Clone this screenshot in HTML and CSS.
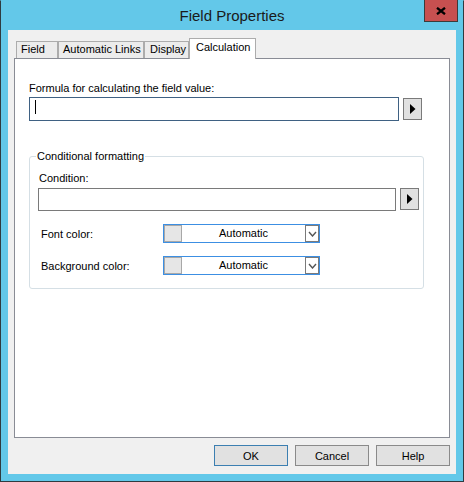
FILE: index.html
```html
<!DOCTYPE html>
<html lang="en">
<head>
  <meta charset="UTF-8" />
  <title>Field Properties</title>
  <link rel="stylesheet" href="styles.css">
</head>
<body>
  <div class="window">
    <div class="titlebar">
      <span class="title">Field Properties</span>
      <div class="close-btn">
        <svg width="10" height="8" viewBox="0 0 10 8"><path d="M1 0.8 L9 7.2 M9 0.8 L1 7.2" stroke="#000" stroke-width="2.3" fill="none"/></svg>
      </div>
    </div>

    <div class="client">
      <div class="tabs">
        <div class="tab tab-field">Field</div>
        <div class="tab tab-links">Automatic Links</div>
        <div class="tab tab-display">Display</div>
        <div class="tab tab-calc active">Calculation</div>
      </div>

      <div class="panel">
        <div class="label formula-label">Formula for calculating the field value:</div>
        <div class="input-row">
          <div class="textbox focused formula-box"><span class="caret"></span></div>
          <div class="arrow-btn">
            <svg width="6" height="10" viewBox="0 0 6 10"><polygon points="0,0 5.5,5 0,10" fill="#000"/></svg>
          </div>
        </div>

        <!-- Conditional formatting group -->
        <fieldset class="group">
          <legend>Conditional formatting</legend>
          <div class="label condition-label">Condition:</div>
          <div class="input-row condition-row">
            <div class="textbox condition-box"></div>
            <div class="arrow-btn">
              <svg width="6" height="10" viewBox="0 0 6 10"><polygon points="0,0 5.5,5 0,10" fill="#000"/></svg>
            </div>
          </div>

          <div class="color-row">
            <span class="color-label">Font color:</span>
            <div class="combo">
              <span class="swatch"></span>
              <span class="combo-text">Automatic</span>
              <span class="drop">
                <svg width="9" height="6" viewBox="0 0 9 6"><polyline points="1,1 4.5,5 8,1" fill="none" stroke="#555" stroke-width="1.4"/></svg>
              </span>
            </div>
          </div>

          <div class="color-row">
            <span class="color-label">Background color:</span>
            <div class="combo">
              <span class="swatch"></span>
              <span class="combo-text">Automatic</span>
              <span class="drop">
                <svg width="9" height="6" viewBox="0 0 9 6"><polyline points="1,1 4.5,5 8,1" fill="none" stroke="#555" stroke-width="1.4"/></svg>
              </span>
            </div>
          </div>
        </fieldset>
      </div>

      <div class="buttons">
        <button class="btn default">OK</button>
        <button class="btn">Cancel</button>
        <button class="btn">Help</button>
      </div>
    </div>
  </div>
</body>
</html>
```

FILE: styles.css
```css
* {
  box-sizing: border-box;
}

body {
  margin: 0;
  font-family: "Liberation Sans", Arial, sans-serif;
  font-size: 11px;
  color: #000;
}

.window {
  position: relative;
  width: 464px;
  height: 482px;
  background: #63c8e9;
  border: 1px solid #2f3b40;
  border-top-color: #63c8e9;
  padding: 0 7px 7px;
}

/* title bar */
.titlebar {
  height: 29px;
  text-align: center;
}

.title {
  font-size: 15px;
  line-height: 29px;
  color: #1a1a1a;
}

.close-btn {
  position: absolute;
  top: -1px;
  left: 423px;
  width: 34px;
  height: 22px;
  background: #c75050;
  border: 1px solid #3b3b3b;
  border-top: none;
  display: flex;
  align-items: center;
  justify-content: center;
}

/* dialog body */
.client {
  height: 444px;
  background: #f0f0f0;
  padding-top: 8px;
}

.tabs {
  display: flex;
  align-items: flex-end;
  height: 20px;
  margin-left: 8px;
}

.tab {
  height: 17px;
  line-height: 15px;
  padding-left: 4px;
  background: #ececec;
  border: 1px solid #acacac;
  border-bottom: none;
  white-space: nowrap;
}

.tab-field { width: 42px; }
.tab-links { width: 86px; }
.tab-display { width: 45px; padding-left: 5px; }

.tab.active {
  position: relative;
  z-index: 1;
  width: 67px;
  height: 21px;
  margin-bottom: -1px;
  padding: 1px 0 0 6px;
  background: #fff;
}

.panel {
  height: 380px;
  margin: 0 6px;
  background: #fff;
  border: 1px solid #898c95;
  padding: 22px 0 0 14px;
}

.label {
  line-height: 15px;
}

.input-row {
  display: flex;
  align-items: flex-start;
  gap: 4px;
  margin-top: 1px;
}

.textbox {
  height: 24px;
  background: #fff;
  border: 1px solid #7a7a7a;
}

.textbox.focused {
  border-color: #3f6183;
}

.formula-box {
  width: 370px;
  padding: 2px 0 0 5px;
}

.caret {
  display: block;
  width: 1px;
  height: 14px;
  background: #000;
}

.arrow-btn {
  width: 19px;
  height: 22px;
  margin-top: 1px;
  background: #e1e1e1;
  border: 1px solid #7a7a7a;
  display: flex;
  align-items: center;
  justify-content: center;
  padding-left: 1px;
}

.group {
  width: 395px;
  margin: 28px 0 0;
  padding: 0 0 13px 6px;
  border: 1px solid #d5dfe5;
  border-radius: 3px;
  min-width: 0;
}

.group legend {
  padding: 0 1px;
  line-height: 15px;
}

.condition-label {
  margin: 7px 0 0 3px;
}

.condition-row {
  margin: 2px 0 0 2px;
}

.condition-box {
  width: 358px;
  height: 23px;
}

.condition-row .arrow-btn {
  margin-top: 0;
}

.color-row {
  display: flex;
  align-items: center;
  margin: 13px 0 0 5px;
}

.color-label {
  width: 122px;
}

.combo {
  display: flex;
  width: 157px;
  height: 19px;
  border: 1px solid #3c8fe3;
  background: #fff;
}

.swatch {
  width: 18px;
  background: #e6e6e6;
  border: 1px solid #a8a8a8;
}

.combo-text {
  flex: 1;
  text-align: center;
  line-height: 17px;
}

.drop {
  width: 14px;
  border: 1px solid #7a7a7a;
  display: flex;
  align-items: center;
  justify-content: center;
}

/* OK / Cancel / Help */
.buttons {
  display: flex;
  justify-content: flex-end;
  gap: 7px;
  margin-top: 7px;
  padding-right: 6px;
}

.btn {
  width: 74px;
  height: 21px;
  padding: 0;
  font-family: inherit;
  font-size: 11px;
  color: #000;
  background: #e1e1e1;
  border: 1px solid #8a8a8a;
}

.btn.default {
  border-color: #3c7fb1;
}
```
